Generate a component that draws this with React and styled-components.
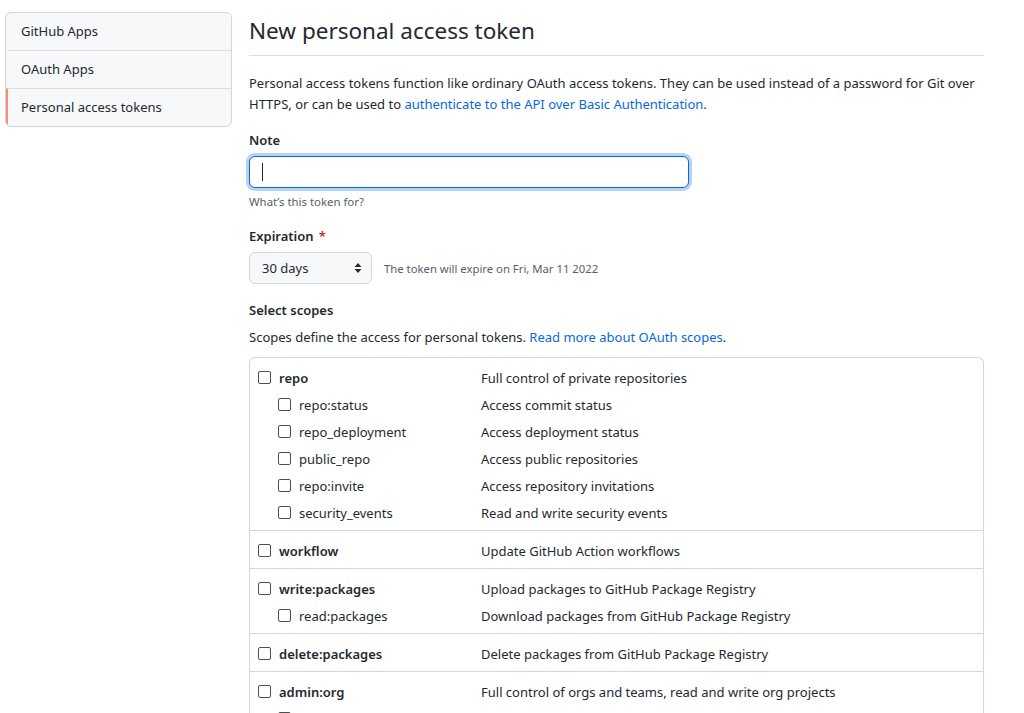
import React from "react";
import styled, { createGlobalStyle } from "styled-components";

const GlobalStyle = createGlobalStyle`
  body {
    margin: 0;
    background: #fff;
    color: #24292f;
    font-family: "Noto Sans", "Liberation Sans", sans-serif;
    font-size: 13px;
  }
`;

const Page = styled.div`
  display: flex;
  align-items: flex-start;
  gap: 17px;
  padding: 12px 40px 0 5px;
`;

const Menu = styled.nav`
  width: 227px;
  box-sizing: border-box;
  flex-shrink: 0;
  border: 1px solid #d0d7de;
  border-radius: 6px;
  background: #f6f8fa;
  overflow: hidden;
`;

const MenuItem = styled.a`
  display: block;
  height: 37px;
  line-height: 37px;
  padding-left: 13px;
  border-left: 2px solid ${(p) => (p.$active ? "#fd8c73" : "transparent")};
  border-top: ${(p) => (p.$first ? "none" : "1px solid #d8dee4")};
  color: #24292f;
  font-size: 13px;
  text-decoration: none;
`;

const Main = styled.main`
  flex: 1;
  min-width: 0;
`;

const Title = styled.h1`
  margin: 0;
  padding: 3px 0 8px;
  font-size: 22.5px;
  font-weight: 400;
  line-height: 32px;
  border-bottom: 1px solid #d8dee4;
`;

const Intro = styled.p`
  margin: 17px 0 0;
  line-height: 21px;
`;

const Link = styled.a`
  color: #0969da;
  text-decoration: none;
`;

const Label = styled.div`
  margin-top: ${(p) => p.$top || 15}px;
  font-weight: 600;
  line-height: 20px;
`;

const Required = styled.span`
  color: #cf222e;
  margin-left: 5px;
`;

const InputWrap = styled.div`
  position: relative;
  margin-top: 6px;
  width: 440px;
`;

const TextInput = styled.input`
  display: block;
  width: 100%;
  height: 32px;
  box-sizing: border-box;
  border: 1px solid #0969da;
  border-radius: 6px;
  outline: none;
  box-shadow: 0 0 0 3px rgba(9, 105, 218, 0.3);
  padding: 0 12px;
  font: inherit;
  caret-color: transparent;
`;

const Caret = styled.span`
  position: absolute;
  left: 13px;
  top: 7px;
  width: 1px;
  height: 18px;
  background: #24292f;
`;

const Hint = styled.div`
  margin-top: 5px;
  font-size: 11.4px;
  color: #57606a;
  line-height: 18px;
`;

const SelectRow = styled.div`
  display: flex;
  align-items: center;
  gap: 12px;
  margin-top: 6px;
`;

const Select = styled.div`
  width: 123px;
  height: 32px;
  box-sizing: border-box;
  border: 1px solid #d0d7de;
  border-radius: 6px;
  background: #f6f8fa;
  display: flex;
  align-items: center;
  justify-content: space-between;
  padding: 0 8px 0 12px;
`;

const Note = styled.span`
  font-size: 11.3px;
  color: #57606a;
`;

const Para = styled.p`
  margin: 7px 0 0;
  line-height: 21px;
`;

const Scopes = styled.div`
  margin-top: 9px;
  border: 1px solid #d0d7de;
  border-bottom: none;
  border-radius: 6px 6px 0 0;
`;

const Group = styled.div`
  padding: 6px 0 4px;
  border-top: ${(p) => (p.$first ? "none" : "1px solid #d0d7de")};
`;

const Row = styled.label`
  display: grid;
  grid-template-columns: 231px 1fr;
  align-items: center;
  height: 27px;
`;

const Name = styled.span`
  display: flex;
  align-items: center;
  gap: 8px;
  padding-left: ${(p) => (p.$sub ? 28 : 8)}px;
  font-weight: ${(p) => (p.$sub ? 400 : 600)};
`;

const Box = styled.span`
  width: 11px;
  height: 11px;
  border: 1px solid #4f4f4f;
  border-radius: 2px;
  flex-shrink: 0;
`;

const Desc = styled.span`
  color: #24292f;
  white-space: nowrap;
`;

const groups = [
  [
    ["repo", "Full control of private repositories"],
    ["repo:status", "Access commit status", true],
    ["repo_deployment", "Access deployment status", true],
    ["public_repo", "Access public repositories", true],
    ["repo:invite", "Access repository invitations", true],
    ["security_events", "Read and write security events", true],
  ],
  [["workflow", "Update GitHub Action workflows"]],
  [
    ["write:packages", "Upload packages to GitHub Package Registry"],
    ["read:packages", "Download packages from GitHub Package Registry", true],
  ],
  [["delete:packages", "Delete packages from GitHub Package Registry"]],
  [
    ["admin:org", "Full control of orgs and teams, read and write org projects"],
    ["write:org", "Read and write org and team membership, read and write org projects", true],
  ],
];

function Arrows() {
  return (
    <svg width="10" height="14" viewBox="0 0 10 14">
      <path d="M5 2 L8.5 6 H1.5 Z M5 12 L1.5 8 H8.5 Z" fill="#24292f" />
    </svg>
  );
}

export default function App() {
  return (
    <>
      <GlobalStyle />
      <Page>
        <Menu>
          <MenuItem $first href="#">GitHub Apps</MenuItem>
          <MenuItem href="#">OAuth Apps</MenuItem>
          <MenuItem $active href="#">Personal access tokens</MenuItem>
        </Menu>
        <Main>
          <Title>New personal access token</Title>
          <Intro>
            Personal access tokens function like ordinary OAuth access tokens. They can be used
            instead of a password for Git over HTTPS, or can be used to{" "}
            <Link href="#">authenticate to the API over Basic Authentication</Link>.
          </Intro>
          <Label $top={15}>Note</Label>
          <InputWrap>
            <TextInput />
            <Caret />
          </InputWrap>
          <Hint>What’s this token for?</Hint>
          <Label $top={15}>
            Expiration<Required>*</Required>
          </Label>
          <SelectRow>
            <Select>
              30 days <Arrows />
            </Select>
            <Note>The token will expire on Fri, Mar 11 2022</Note>
          </SelectRow>
          <Label $top={16}>Select scopes</Label>
          <Para>
            Scopes define the access for personal tokens.{" "}
            <Link href="#">Read more about OAuth scopes</Link>.
          </Para>
          <Scopes>
            {groups.map((g, i) => (
              <Group key={i} $first={i === 0}>
                {g.map(([name, desc, sub]) => (
                  <Row key={name}>
                    <Name $sub={sub}>
                      <Box />
                      {name}
                    </Name>
                    <Desc>{desc}</Desc>
                  </Row>
                ))}
              </Group>
            ))}
          </Scopes>
        </Main>
      </Page>
    </>
  );
}
